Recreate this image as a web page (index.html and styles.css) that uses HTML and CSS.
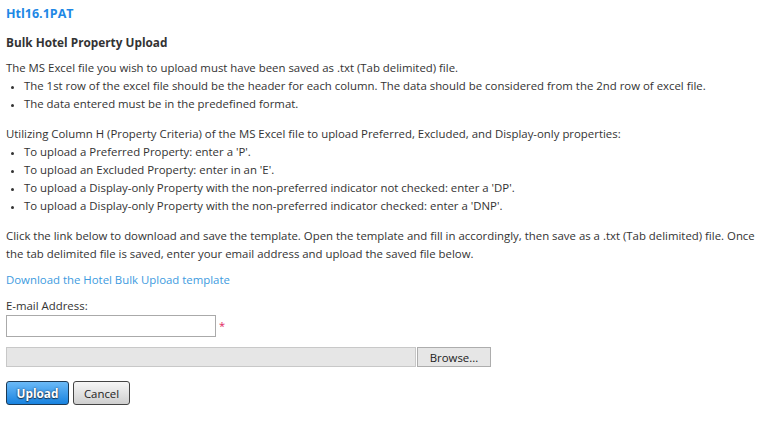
FILE: index.html
```html
<!DOCTYPE html>
<html lang="en">
<head>
  <meta charset="UTF-8">
  <title>Bulk Hotel Property Upload</title>
  <link rel="stylesheet" href="styles.css">
</head>
<body>
  <div class="page-title">Htl16.1PAT</div>
  <h2>Bulk Hotel Property Upload</h2>

  <p>The MS Excel file you wish to upload must have been saved as .txt (Tab delimited) file.</p>
  <ul>
    <li>The 1st row of the excel file should be the header for each column. The data should be considered from the 2nd row of excel file.</li>
    <li>The data entered must be in the predefined format.</li>
  </ul>

  <p>Utilizing Column H (Property Criteria) of the MS Excel file to upload Preferred, Excluded, and Display-only properties:</p>
  <ul>
    <li>To upload a Preferred Property: enter a 'P'.</li>
    <li>To upload an Excluded Property: enter in an 'E'.</li>
    <li>To upload a Display-only Property with the non-preferred indicator not checked: enter a 'DP'.</li>
    <li>To upload a Display-only Property with the non-preferred indicator checked: enter a 'DNP'.</li>
  </ul>

  <p class="wrap">Click the link below to download and save the template. Open the template and fill in accordingly, then save as a .txt (Tab delimited) file. Once the tab delimited file is saved, enter your email address and upload the saved file below.</p>

  <p class="link-row"><a href="#">Download the Hotel Bulk Upload template</a></p>

  <label class="field-label" for="email">E-mail Address:</label>
  <div class="email-row">
    <input type="text" id="email">
    <span class="required">*</span>
  </div>

  <div class="file-row">
    <div class="file-name"></div>
    <button class="browse">Browse...</button>
  </div>

  <div class="actions">
    <button class="btn btn-primary">Upload</button>
    <button class="btn btn-cancel">Cancel</button>
  </div>
</body>
</html>
```

FILE: styles.css
```css
body {
  margin: 0;
  padding: 5px 2px 5px 6px;
  font-family: "Open Sans", "Noto Sans", sans-serif;
  font-size: 11.4px;
  line-height: 18px;
  color: #333;
  background: #fff;
}
.page-title {
  color: #1e88e5;
  font-weight: bold;
  font-size: 12.5px;
}
h2 {
  font-size: 11.8px;
  font-weight: bold;
  margin: 10px 0 8px;
}
p {
  margin: 0;
}
ul {
  margin: 0 0 12px;
  padding-left: 18px;
}
li::marker {
  font-size: 9px;
}
.wrap {
  margin-bottom: 8px;
}
.link-row {
  margin-bottom: 8px;
}
a {
  color: #3d9be0;
  text-decoration: none;
}
.field-label {
  display: block;
}
.email-row {
  display: flex;
  align-items: center;
  gap: 3px;
  height: 22px;
}
.email-row input {
  width: 210px;
  height: 22px;
  box-sizing: border-box;
  border: 1px solid #aaa;
  margin: 0;
  padding: 2px 4px;
}
.required {
  color: #e0245e;
  font-size: 11px;
}
.file-row {
  display: flex;
  margin-top: 10px;
  height: 20px;
}
.file-name {
  width: 410px;
  box-sizing: border-box;
  background: #e6e6e6;
  border: 1px solid #c8c8c8;
}
.browse {
  width: 74px;
  margin: 0 0 0 1px;
  padding: 0;
  box-sizing: border-box;
  background: #e6e6e6;
  border: 1px solid #adadad;
  font-family: inherit;
  font-size: 11.4px;
  color: #222;
}
.actions {
  display: flex;
  gap: 4px;
  margin-top: 14px;
}
.btn {
  height: 24px;
  padding: 0;
  box-sizing: border-box;
  font-family: inherit;
  font-size: 11.4px;
  color: #222;
  border: 1px solid #444;
  border-radius: 3px;
  background: linear-gradient(#f6f6f6, #cfcfcf);
}
.btn-primary {
  width: 63px;
  color: #fff;
  font-weight: bold;
  font-size: 11.8px;
  background: linear-gradient(#6bbaf7, #1883e0);
  border-color: #1d3a55;
  text-shadow: 0 0 2px #1a3550, 0 1px 1px #1a3550;
}
.btn-cancel {
  width: 57px;
}
```
